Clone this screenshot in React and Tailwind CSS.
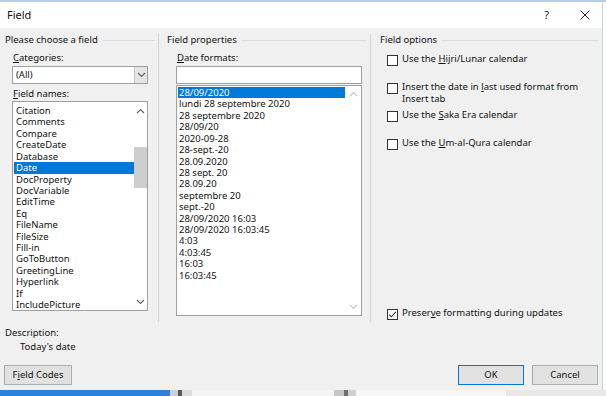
import { useState } from 'react'

const FIELD_NAMES = ['Citation', 'Comments', 'Compare', 'CreateDate', 'Database', 'Date', 'DocProperty', 'DocVariable', 'EditTime', 'Eq', 'FileName', 'FileSize', 'Fill-in', 'GoToButton', 'GreetingLine', 'Hyperlink', 'If', 'IncludePicture']

const DATE_FORMATS = ['28/09/2020', 'lundi 28 septembre 2020', '28 septembre 2020', '28/09/20', '2020-09-28', '28-sept.-20', '28.09.2020', '28 sept. 20', '28.09.20', 'septembre 20', 'sept.-20', '28/09/2020 16:03', '28/09/2020 16:03:45', '4:03', '4:03:45', '16:03', '16:03:45']

function Chevron({ up, color = '#606060' }) {
  return (
    <svg width="9" height="6" viewBox="0 0 9 6">
      <polyline points={up ? '1,5 4.5,1.5 8,5' : '1,1 4.5,4.5 8,1'} fill="none" stroke={color} strokeWidth="1.1" />
    </svg>
  )
}

function GroupHeader({ children }) {
  return (
    <div className="flex items-center h-[12px] leading-[12px]">
      <span className="whitespace-nowrap">{children}</span>
      <div className="flex-1 h-px bg-[#dcdcdc] ml-[4px] mr-[3px]" />
    </div>
  )
}

function Check({ label, checked, onToggle }) {
  return (
    <div className="flex items-start h-[28px] cursor-default" onClick={onToggle}>
      <div className="w-[11px] h-[11px] mt-[2px] border border-[#333] bg-white flex items-center justify-center shrink-0">
        {checked && (
          <svg width="9" height="9" viewBox="0 0 9 9">
            <polyline points="1.2,4.6 3.4,6.8 7.8,1.8" fill="none" stroke="#333" strokeWidth="1.1" />
          </svg>
        )}
      </div>
      <div className="ml-[4px] leading-[12px]">{label}</div>
    </div>
  )
}

export default function App() {
  const [field, setField] = useState('Date')
  const [format, setFormat] = useState('28/09/2020')
  const [opts, setOpts] = useState({ hijri: false, last: false, saka: false, umq: false, preserve: true })
  const toggle = k => setOpts(p => ({ ...p, [k]: !p[k] }))

  return (
    <div className="w-[606px] h-[396px] flex flex-col bg-white overflow-hidden font-['Noto_Sans',sans-serif] text-[9.5px] text-[#111]">
      <div className="h-[2px] bg-[#b9cee4]" />
      <div className="flex-1 flex min-h-0">
        <div className="w-[603px] flex flex-col border-r border-[#c3d3e4]">
          {/* Title bar */}
          <div className="h-[26px] bg-white flex items-center pl-[7px]">
            <span className="text-[11px]">Field</span>
            <span className="ml-auto text-[11px] mr-[31px]">?</span>
            <svg width="10" height="10" viewBox="0 0 10 10" className="mr-[12px]">
              <path d="M0.5 0.5 L9.5 9.5 M9.5 0.5 L0.5 9.5" stroke="#222" strokeWidth="1" />
            </svg>
          </div>

          <div className="flex-1 bg-[#f0f0f0] flex flex-col">
            <div className="flex h-[294px] pt-[6px]">
              {/* Left */}
              <div className="w-[158px] flex flex-col">
                <div className="pl-[5px]"><GroupHeader>Please choose a field</GroupHeader></div>
                <div className="ml-[12px] w-[136px] flex flex-col">
                  <div className="mt-[6px] pl-[1px] leading-[12px]"><u>C</u>ategories:</div>
                  <div className="mt-[2px] h-[18px] border border-[#a0a0a0] bg-white flex items-center">
                    <span className="pl-[3px] flex-1">(All)</span>
                    <div className="w-[13px] h-full bg-[#e5e5e5] border-l border-[#c8c8c8] flex items-center justify-center">
                      <Chevron />
                    </div>
                  </div>
                  <div className="mt-[4px] pl-[1px] leading-[12px]"><u>F</u>ield names:</div>
                  <div className="mt-[1px] h-[210px] border border-[#a0a0a0] bg-white flex overflow-hidden">
                    <div className="flex-1 pt-[3px] pl-[1px]">
                      {FIELD_NAMES.map(n => (
                        <div key={n} onClick={() => setField(n)}
                          className={`h-[11.43px] leading-[11.43px] pl-[2px] whitespace-nowrap ${field === n ? 'bg-[#0078d7] text-white' : ''}`}>
                          {n}
                        </div>
                      ))}
                    </div>
                    <div className="w-[13px] flex flex-col items-center">
                      <div className="h-[17px] flex items-center justify-center"><Chevron up /></div>
                      <div className="flex-1 w-full relative">
                        <div className="absolute left-0 right-0 top-[28px] h-[41px] bg-[#cdcdcd]" />
                      </div>
                      <div className="h-[17px] flex items-center justify-center"><Chevron /></div>
                    </div>
                  </div>
                </div>
              </div>

              {/* Middle */}
              <div className="w-[212px] border-l border-[#d5d5d5] flex flex-col">
                <div className="pl-[8px]"><GroupHeader>Field properties</GroupHeader></div>
                <div className="ml-[17px] w-[186px] flex flex-col">
                  <div className="mt-[6px] pl-[1px] leading-[12px]"><u>D</u>ate formats:</div>
                  <div className="mt-[2px] h-[18px] border border-[#a0a0a0] bg-white" />
                  <div className="mt-[1px] h-[231px] border border-[#a0a0a0] bg-white flex overflow-hidden">
                    <div className="flex-1 pt-[1px] pl-[1px]">
                      {DATE_FORMATS.map(f => (
                        <div key={f} onClick={() => setFormat(f)}
                          className={`h-[11.43px] leading-[11.43px] pl-[1px] whitespace-nowrap ${format === f ? 'bg-[#0078d7] text-white' : ''}`}>
                          {f}
                        </div>
                      ))}
                    </div>
                    <div className="w-[16px] flex flex-col items-center justify-between py-[5px]">
                      <Chevron up color="#c4c4c4" />
                      <Chevron color="#c4c4c4" />
                    </div>
                  </div>
                </div>
              </div>

              {/* Right */}
              <div className="flex-1 border-l border-[#d5d5d5] flex flex-col">
                <div className="pl-[9px]"><GroupHeader>Field options</GroupHeader></div>
                <div className="ml-[16px] mt-[7px] flex flex-col">
                  <Check label={<>Use the <u>H</u>ijri/Lunar calendar</>} checked={opts.hijri} onToggle={() => toggle('hijri')} />
                  <Check label={<>Insert the date in <u>l</u>ast used format from<br />Insert tab</>} checked={opts.last} onToggle={() => toggle('last')} />
                  <Check label={<>Use the <u>S</u>aka Era calendar</>} checked={opts.saka} onToggle={() => toggle('saka')} />
                  <Check label={<>Use the <u>U</u>m-al-Qura calendar</>} checked={opts.umq} onToggle={() => toggle('umq')} />
                </div>
                <div className="ml-[16px] mt-auto mb-[-13px]">
                  <Check label={<>Preser<u>v</u>e formatting during updates</>} checked={opts.preserve} onToggle={() => toggle('preserve')} />
                </div>
              </div>
            </div>

            {/* Description */}
            <div className="pl-[5px] mt-[5px] leading-[12px]">Description:</div>
            <div className="pl-[20px] mt-[2px] leading-[12px]">Today's date</div>

            {/* Buttons */}
            <div className="flex items-center mt-[12px] px-[4px]">
              <button className="w-[68px] h-[20px] bg-[#e1e1e1] border border-[#adadad] text-[9.5px]">F<u>i</u>eld Codes</button>
              <button className="ml-auto w-[66px] h-[20px] bg-[#e1e1e1] border border-[#0078d7] text-[9.5px]">OK</button>
              <button className="ml-[8px] w-[66px] h-[20px] bg-[#e1e1e1] border border-[#adadad] text-[9.5px]">Cancel</button>
            </div>
          </div>
        </div>
      </div>

      {/* Taskbar edge */}
      <div className="h-[6px] flex">
        <div className="w-[170px] bg-[#2f80d8]" />
        <div className="w-[8px] bg-[#cfcfcf]" />
        <div className="w-[4px] bg-[#5a5a5a]" />
        <div className="w-[10px] bg-[#dcdcdc]" />
        <div className="w-[142px] bg-[#f4f4f4]" />
        <div className="w-[10px] bg-[#c6c6c6]" />
        <div className="w-[4px] bg-[#6f6f6f]" />
        <div className="w-[8px] bg-[#d0d0d0]" />
        <div className="w-[150px] bg-[#f7f7f7]" />
        <div className="flex-1 bg-[#e8e8e8]" />
      </div>
    </div>
  )
}
